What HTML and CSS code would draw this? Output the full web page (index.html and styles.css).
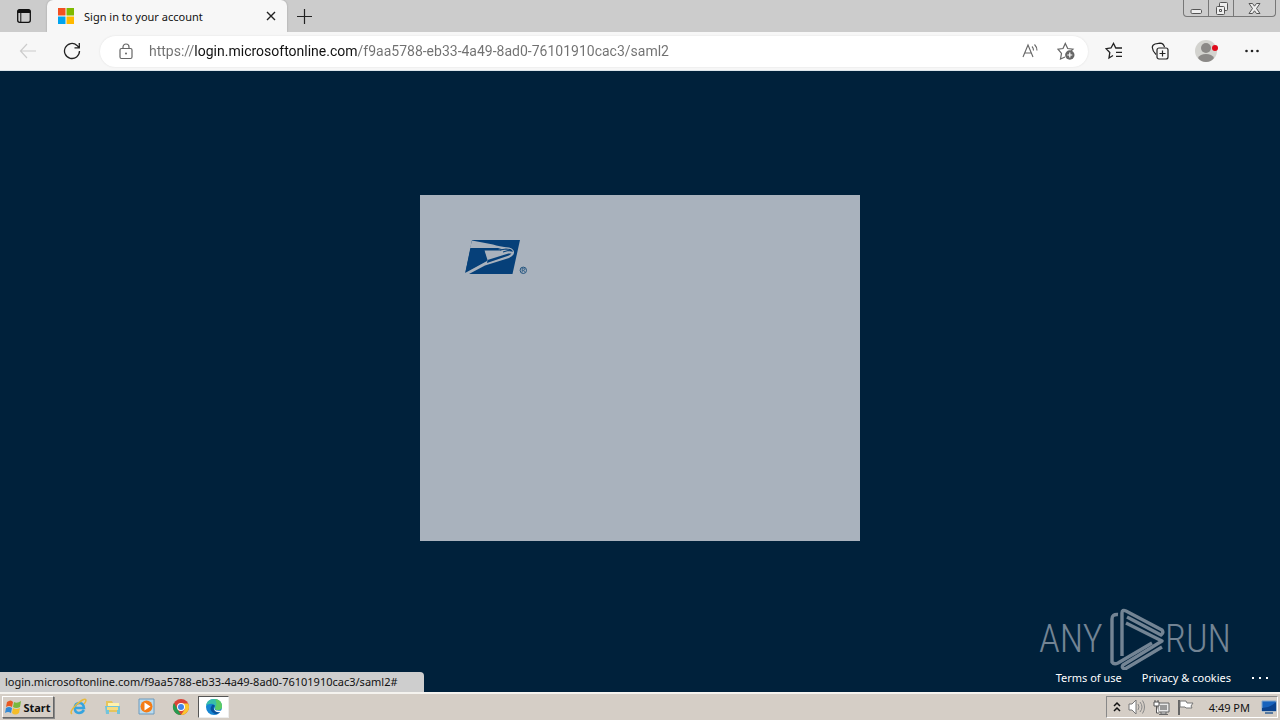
FILE: index.html
```html
<!DOCTYPE html>
<html lang="en">
<head>
<meta charset="utf-8">
<title>Sign in to your account</title>
<link rel="stylesheet" href="styles.css">
</head>
<body>
<header class="tabstrip">
  <button class="tab-actions" aria-label="Tab actions menu">
    <svg width="16" height="16" viewBox="0 0 16 16"><rect x="1.7" y="1.7" width="12.6" height="12.6" rx="2" fill="none" stroke="#111" stroke-width="1.3"/><path d="M1.5 5V3.5q0-2 2-2h9q2 0 2 2V5z" fill="#111"/><path d="M4.8 5v9" stroke="#111"/></svg>
  </button>
  <div class="tab">
    <svg width="16" height="16" viewBox="0 0 16 16"><path fill="#f25022" d="M0 0h7.5v7.5H0z"/><path fill="#7fba00" d="M8.5 0H16v7.5H8.5z"/><path fill="#00a4ef" d="M0 8.500h7.500V16H0z"/><path fill="#ffb900" d="M8.500 8.500H16V16H8.500z"/></svg>
    <span class="tab-title">Sign in to your account</span>
    <button class="tab-close" aria-label="Close tab"><svg width="10" height="10" viewBox="0 0 10 10"><path d="M1 1l8 8M9 1L1 9" stroke="#222" stroke-width="1.4"/></svg></button>
  </div>
  <button class="new-tab" aria-label="New tab"><svg width="15" height="15" viewBox="0 0 15 15"><path d="M7.500 0v15M0 7.500h15" stroke="#222" stroke-width="1.200"/></svg></button>
  <div class="window-controls">
    <button class="win-btn" aria-label="Minimize"><svg width="14" height="15" viewBox="0 0 14 15"><rect x="2" y="8.500" width="10.500" height="4" rx="1.200" fill="#eee" stroke="#555"/></svg></button>
    <button class="win-btn" aria-label="Restore"><svg width="15" height="15" viewBox="0 0 15 15"><g fill="#eee" stroke="#555"><rect x="5.500" y="1.500" width="8" height="8" rx="1"/><rect x="2.500" y="5.500" width="8" height="8" rx="1"/><path d="M5.500 8.500h2v2h-2z"/></g></svg></button>
    <button class="win-btn win-close" aria-label="Close"><svg width="15" height="15" viewBox="0 0 15 15"><path d="M2 2.500h3.500l2 2.700 2-2.700H13L9.500 7.500l3.500 5H9.500l-2-2.700-2 2.700H2l3.500-5z" fill="#eee" stroke="#555"/></svg></button>
  </div>
</header>
<nav class="toolbar" aria-label="Browser toolbar">
  <button class="tool" aria-label="Back" disabled><svg width="18" height="16" viewBox="0 0 18 16"><path d="M8 1L1.500 8 8 15M2 8h15" fill="none" stroke="#ccc" stroke-width="1.200"/></svg></button>
  <button class="tool" aria-label="Refresh"><svg width="18" height="18" viewBox="0 0 18 18"><path d="M16.500 9A7.500 7.500 0 1 1 14 3.400L16 5.500M16.300 1v4.800H11.500" fill="none" stroke="#222" stroke-width="1.300"/></svg></button>
  <form class="address">
    <svg width="14" height="17" viewBox="0 0 14 17"><rect x="1" y="5.500" width="12" height="10" rx="1.500" fill="none" stroke="#666" stroke-width="1.200"/><path d="M4 5.500V4a3 3 0 0 1 6 0v1.500" fill="none" stroke="#666" stroke-width="1.200"/><circle cx="7" cy="10.500" r="1" fill="#666"/></svg>
    <input class="url" type="text" aria-label="Address and search bar" spellcheck="false" value="https://login.microsoftonline.com/f9aa5788-eb33-4a49-8ad0-76101910cac3/saml2">
    <button class="inline-tool" type="button" aria-label="Read aloud"><svg width="17" height="16" viewBox="0 0 17 16"><path d="M1 14L6 2l5 12M2.700 10h6.600M10 3.500q1.500 1.500 1.500 4M12.500 1.500q2.500 2.500 2.500 6" fill="none" stroke="#666" stroke-width="1.100"/></svg></button>
    <button class="inline-tool" type="button" aria-label="Add to favorites"><svg width="18" height="18" viewBox="0 0 18 18"><path d="M8 15l-4.500 2 1-5.700L1 7.200l5-.7L8.300 1.500l2.400 5 5.300.7-2 2" fill="none" stroke="#666" stroke-width="1.200"/><circle cx="12.800" cy="13" r="4.700" fill="#666"/><path d="M12.800 10.500v5M10.300 13h5" stroke="#fff" stroke-width="1.200"/></svg></button>
  </form>
  <button class="tool wide" aria-label="Favorites"><svg width="18" height="18" viewBox="0 0 18 18"><path d="M8 13.500l-4 2.500.8-5.500L1 6.700l5-.7 2.500-4.500L10.800 6H17M11 10.300h6M11 14.300h6" fill="none" stroke="#222" stroke-width="1.300"/></svg></button>
  <button class="tool wide" aria-label="Collections"><svg width="18" height="18" viewBox="0 0 18 18"><g fill="none" stroke="#222" stroke-width="1.200"><path d="M5 12.500Q1.500 9 1.300 5.500 1.200 3 4 2l5-.8q3.500 0 4.500 4"/><rect x="6" y="6" width="11" height="11" rx="2" fill="#f7f7f7"/><path d="M11.500 8.500v6M8.500 11.500h6"/></g></svg></button>
  <button class="tool wide" aria-label="Profile"><svg width="24" height="24" viewBox="0 0 24 24"><circle cx="12" cy="12" r="11" fill="#d3d3cf"/><circle cx="12" cy="9" r="5" fill="#8b8987"/><path d="M4 19q2-4 8-4t8 4q-3 4-8 4t-8-4z" fill="#8b8987"/><circle cx="21" cy="9" r="3" fill="#e00b1c"/></svg></button>
  <button class="tool wide" aria-label="Settings and more"><svg width="14" height="4" viewBox="0 0 14 4"><g fill="#222"><circle cx="1.500" cy="2" r="1.300"/><circle cx="7" cy="2" r="1.300"/><circle cx="12.500" cy="2" r="1.300"/></g></svg></button>
</nav>
<main class="page">
  <section class="card" aria-label="Sign in">
    <svg width="64" height="36" viewBox="0 0 64 36" role="img" aria-label="USPS"><path d="M8 1h48l-7.500 34H1z" fill="#064079"/><path d="M8 1.500L6 9h28l5 1.500L20 11l3 11L1 34v1h4l16-8.500L45 19q4-1.500 5-5 .5-4-5-5.500-10-1-16-3z" fill="#a9b2bd"/><path d="M6.500 9.800H33l5 1.700H20.500L23.500 21 1.500 33z" fill="#064079"/><path d="M23.500 21l16-5 5-1.500h3q-1 1.500-4 2.500L23 24z" fill="#064079"/><path d="M36 11l6-1q5 0 6 2l-4-.5-5 1.500" fill="none" stroke="#064079" stroke-width="1.200"/><circle cx="59.300" cy="31.300" r="3.200" fill="none" stroke="#245580"/><path d="M58.200 33.300v-4h1.300q1.200 0 1.200 1t-1.200 1h-1.200m1.300 0l1.200 2" fill="none" stroke="#245580" stroke-width=".8"/></svg>
  </section>
  <div class="bottom">
    <output class="status">login.microsoftonline.com/f9aa5788-eb33-4a49-8ad0-76101910cac3/saml2#</output>
    <footer class="footer">
      <div class="watermark"><span>ANY</span>
        <svg width="56" height="62" viewBox="0 0 56 62"><g fill="none" stroke="#738494" stroke-width="3.400" stroke-linejoin="round"><path d="M8 6.500Q2 6 2 11v43q2 3 6 1l34-20"/><path d="M12 48V5q0-4 4-2l36 19q2 3-1 5L17 9"/><path d="M16 15l36 18-39 24q-2 3 2 4l37-22"/></g></svg>
        <span class="mark-end">RUN</span></div>
      <div class="links"><a href="#">Terms of use</a><a href="#">Privacy &amp; cookies</a><button class="dots" aria-label="More options"><svg width="18" height="4" viewBox="0 0 18 4"><path d="M1 1h2v2H1zM8 1h2v2H8zM15 1h2v2h-2z" fill="#fff"/></svg></button></div>
    </footer>
  </div>
</main>
<footer class="taskbar">
  <button class="start"><svg width="17" height="17" viewBox="0 0 17 17"><path d="M2 3q4-3 6 0L7 8Q4 6 1 8z" fill="#e85822"/><path d="M9 3q3 2 7-1l-1 6q-4 2-7 0z" fill="#79b83d"/><path d="M1 9q3-2 6 0l-1 5q-3-2-6 0z" fill="#3189d6"/><path d="M8 9q3 2 7 0l-1 5q-4 3-7 0z" fill="#f5bd28"/></svg>Start</button>
  <div class="apps">
    <button class="app" aria-label="Internet Explorer"><svg width="18" height="18" viewBox="0 0 18 18"><path d="M14 12q-2 3-5 3-4 0-4.300-5Q5 5 9.500 5q4 0 4.500 5H6" fill="none" stroke="#36a4df" stroke-width="2.500"/><path d="M2 16Q-1 14 6 7q9-8 10-5 0 2-2 4" fill="none" stroke="#e8b93b" stroke-width="1.500"/></svg></button>
    <button class="app" aria-label="File Explorer"><svg width="18" height="18" viewBox="0 0 18 18"><path d="M2 3h6l1 2h6v9H2z" fill="#e6c45c"/><path d="M4 5h11v7H4z" fill="#fff2ac"/><path d="M1 8h15v8h-3v-4H5v4H2z" fill="#72c4dc"/><path d="M3 9h11v3H3z" fill="#f6dc80"/></svg></button>
    <button class="app" aria-label="Media Player"><svg width="18" height="18" viewBox="0 0 18 18"><path d="M1 1h15v15H1z" fill="#b9dbef" stroke="#6d9abd"/><circle cx="8.500" cy="8.500" r="6" fill="#f47c16"/><path d="M6.500 4.500v8l6-4z" fill="#fff"/></svg></button>
    <button class="app" aria-label="Chrome"><svg width="18" height="18" viewBox="0 0 18 18"><circle cx="9" cy="9" r="8" fill="#db4437"/><path d="M2 5l4 7 3 5A8 8 0 0 1 2 5z" fill="#259b50"/><path d="M9 5.500h7.200A8 8 0 0 1 9 17l4-6z" fill="#fbc72f"/><circle cx="9" cy="9" r="4" fill="#fff"/><circle cx="9" cy="9" r="3" fill="#4285e8"/></svg></button>
    <button class="app active" aria-label="Microsoft Edge"><svg width="18" height="18" viewBox="0 0 18 18"><circle cx="9" cy="9" r="8" fill="#1685d2"/><path d="M1 8Q2 1 9 1t8 7q0 4-4 4-4 0-3-3Q9 5 5 6 2 6 1 8z" fill="#39bfa8"/><path d="M10 1q7 1 7 7 0 4-4 4-3 0-3-2 3-4 0-9z" fill="#5dcc63"/><path d="M7 7q-4 6 3 9 3 1 6-3-3 1-6-1-3-2 0-4-1-2-3-1z" fill="#08529d"/><path d="M9.500 9q-1 5 7.500 3.500l1 1.500q-6 1-8-1-2-2-.5-4z" fill="#fff"/></svg></button>
  </div>
  <div class="tray">
    <svg width="8" height="12" viewBox="0 0 8 12"><path d="M1 5l3-3 3 3M1 10l3-3 3 3" fill="none" stroke="#111" stroke-width="1.500"/></svg>
    <svg width="18" height="16" viewBox="0 0 18 16"><path d="M1 5h3l4-4v14l-4-4H1z" fill="#fff" stroke="#777"/><path d="M10 5q2 3 0 6M12 3q4 5 0 10M14.500 1.500q4 6.500 0 13" fill="none" stroke="#888"/></svg>
    <svg width="17" height="17" viewBox="0 0 17 17"><path d="M5 4h11v9H5zM8 13v2h5v-2M6 15.500h9" fill="#e8e8e8" stroke="#666"/><path d="M7 6h7v5H7z" fill="#999"/><path d="M1 3h5v4H1zM2 1v2M5 1v2M3.500 7v7H6" fill="#fff" stroke="#555"/></svg>
    <svg width="17" height="16" viewBox="0 0 17 16"><path d="M2 1v15" stroke="#666" stroke-width="2"/><path d="M3 2h6l1 2h6l-2 3 1 2H9L8 8H3z" fill="#fff" stroke="#777"/></svg>
    <time class="clock">4:49 PM</time>
    <button class="desktop" aria-label="Show desktop"><svg width="16" height="15" viewBox="0 0 16 15"><path d="M1 1h14v10H1z" fill="#1863bd" stroke="#80a7ce"/><path d="M1 8Q9 8 15 2v9H1z" fill="#0b438e"/><path d="M4 13h8" stroke="#587aa0" stroke-width="2"/></svg></button>
  </div>
</footer>
</body>
</html>
```
FILE: styles.css
```css
* { box-sizing: border-box; }
body {
  margin: 0;
  min-height: 100vh;
  display: flex;
  flex-direction: column;
  font-family: "Noto Sans", "Open Sans", sans-serif;
  font-size: 11px;
  color: #111;
}
button { border: 0; padding: 0; background: none; font: inherit; color: inherit; display: flex; align-items: center; justify-content: center; flex: none; }
svg { display: block; flex: none; }
.tabstrip { height: 32px; display: flex; background: #cccccc; }
.tab-actions { width: 47px; }
.tab { width: 240px; display: flex; align-items: center; padding: 0 6px 0 11px; gap: 10px; background: #f7f7f7; border-radius: 6px 6px 0 0; box-shadow: 0 0 2px #999; }
.tab-title { flex: 1; white-space: nowrap; }
.tab-close { width: 20px; height: 20px; }
.new-tab { width: 35px; }
.window-controls { display: flex; height: 17px; margin: 0 4px 0 auto; border: 1px solid #777; border-top: 0; border-radius: 0 0 4px 4px; }
.win-btn { width: 25px; border-right: 1px solid #777; }
.win-close { width: 41px; border: 0; }
.toolbar { height: 39px; display: flex; align-items: center; padding: 0 5px 0 6px; background: #f7f7f7; border-bottom: 1px solid #dce5eb; }
.tool { width: 44px; height: 32px; }
.wide { width: 46px; }
.address { flex: 1; min-width: 0; height: 31px; margin: 0 3px 0 6px; display: flex; align-items: center; padding: 0 4px 0 19px; background: #fff; border-radius: 16px; box-shadow: 0 0 2px #ddd; }
.url {
  flex: 1;
  min-width: 0;
  height: 24px;
  margin-left: 16px;
  padding: 0;
  border: 0;
  outline: 0;
  font-family: Roboto, "Noto Sans", sans-serif;
  font-size: 14px;
  color: transparent;
  background: linear-gradient(90deg, #707070 46px, #111 46px, #111 208px, #707070 208px);
  -webkit-background-clip: text;
  background-clip: text;
}
.inline-tool { width: 36px; height: 28px; }
.page { flex: 1; display: grid; grid-template-rows: 1fr auto 1fr; background: #00213b; }
.card { grid-row: 2; justify-self: center; width: 100%; max-width: 440px; min-height: 346px; padding: 44px; margin-bottom: 28px; background: #a9b2bd; }
.bottom { grid-row: 3; display: flex; align-items: flex-end; justify-content: space-between; }
.status { min-width: 424px; height: 20px; padding: 0 5px; background: #cecece; border-radius: 0 4px 0 0; line-height: 20px; }
.footer { padding: 0 11px 6px 0; color: #fff; }
.watermark { display: grid; grid-template-columns: 71px 56px 65px; align-items: center; width: 192px; height: 62px; margin: 0 38px 0 auto; color: #738494; font-family: "Roboto Condensed", "Liberation Sans Narrow", "DejaVu Sans Condensed", sans-serif; font-size: 38px; font-weight: 300; line-height: 40px; }
.mark-end { justify-self: end; }
.links { display: flex; justify-content: flex-end; gap: 20px; line-height: 16px; }
.links a { color: #fff; text-decoration: none; }
.taskbar { height: 28px; display: flex; align-items: center; padding: 0 2px; background: #d5cec6; border-top: 2px solid #f5f3ef; }
.start { height: 22px; width: 52px; gap: 1px; border: 1px solid; border-color: #fff #666 #666 #fff; box-shadow: 1px 1px #888; font-size: 11px; font-weight: 700; }
.apps { display: flex; align-items: center; padding-left: 8px; }
.app { width: 34px; height: 22px; }
.active { width: 31px; background: #fff; border: 1px solid; border-color: #555 #eee #eee #555; }
.tray { height: 22px; margin-left: auto; padding: 0 0 0 6px; display: flex; align-items: center; gap: 7px; border: 1px solid; border-color: #888 #fff #fff #888; }
.clock { margin: 0 4px 0 8px; }
```
